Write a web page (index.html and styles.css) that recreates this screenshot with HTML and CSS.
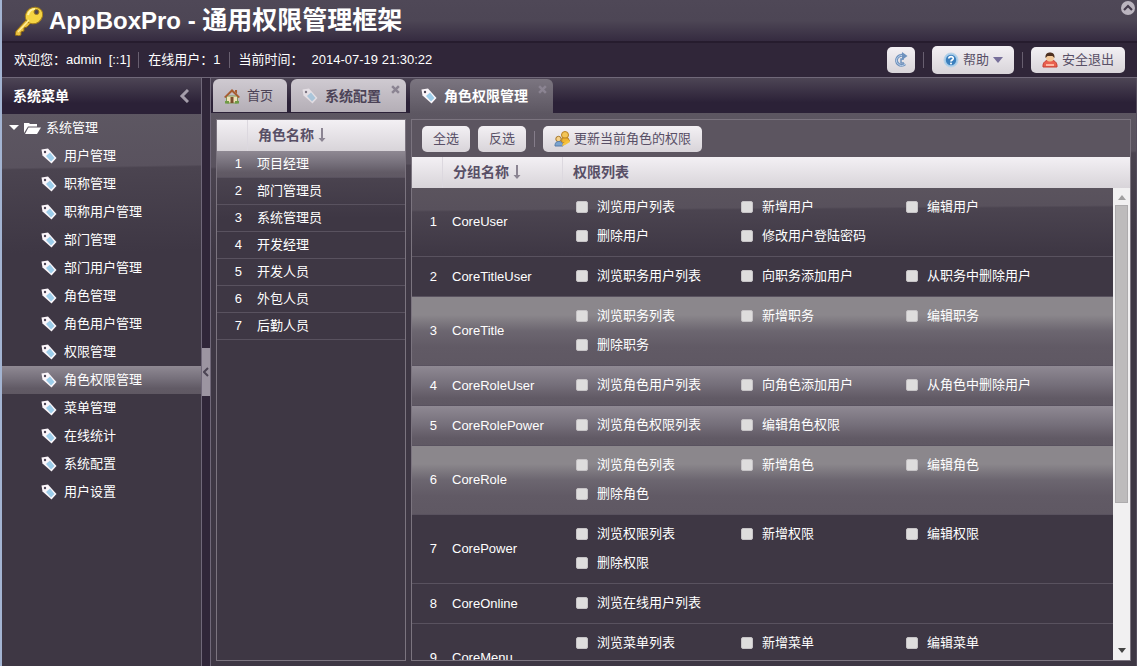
FILE: index.html
```html
<!DOCTYPE html>
<html lang="zh-CN">
<head>
<meta charset="utf-8">
<title>AppBoxPro - 通用权限管理框架</title>
<link rel="stylesheet" href="styles.css">
</head>
<body>
<svg class="defs" aria-hidden="true">
  <symbol id="tag" viewBox="0 0 16 16">
    <path d="M.5 1.500 7 .5l8.500 9.500-5 5.500L1.500 7.500Z" fill="#fbf6fa"/>
    <path d="m5 8 4-3.500 4.500 5.500-3.500 3.500Z" fill="#9ccdea"/>
    <circle cx="4" cy="4" r="1.200" fill="#4c4455"/>
  </symbol>
  <symbol id="arrow" viewBox="0 0 8 14"><path d="M3 0h2v10h2.500L4 14 .5 10H3Z" fill="#8b8492"/></symbol>
  <symbol id="cross" viewBox="0 0 8 8"><path d="m1 1 6 6M7 1 1 7" stroke="#8b8492" stroke-width="2.200"/></symbol>
</svg>
<div class="app">
  <header class="banner">
    <svg class="key" viewBox="0 0 28 30">
      <path d="M12 13 1 25l-1 4 4 1 2-1v-3l3-1v-3l3-1 4-4Z" fill="#e9c040" stroke="#8d6814" stroke-width="1"/>
      <ellipse cx="19" cy="9.500" rx="9" ry="8" fill="#f4d443" stroke="#a37e1c" transform="rotate(-35 19 9.500)"/>
      <path d="M13 9c1-4 4-6 7-6" stroke="#fff3a5" stroke-width="2" fill="none"/>
      <circle cx="21.500" cy="6" r="2.500" fill="#4b4453" stroke="#a37e1c"/>
      <path d="M3 26 14 14" stroke="#fff0a0" stroke-width="1.200"/>
    </svg>
    <h1>AppBoxPro - <span>通用权限管理框架</span></h1>
    <button class="fold" aria-label="折叠"><svg viewBox="0 0 14 14"><circle cx="7" cy="7" r="7" fill="#bbb5bf"/><path d="m3 9 4-4 4 4" fill="none" stroke="#443b4c" stroke-width="2.200"/></svg></button>
  </header>
  <div class="status">
    <span>欢迎您：admin&nbsp; [::1]</span><i class="sep"></i>
    <span>在线用户：1</span><i class="sep"></i>
    <span>当前时间：</span><span class="time">2014-07-19 21:30:22</span>
    <div class="actions">
      <button class="btn square" aria-label="刷新"><svg class="ico" viewBox="0 0 16 16"><path d="M12 12a5 5 0 1 1-1-8" fill="none" stroke="#6f91bd" stroke-width="3"/><path d="M12 12a5 5 0 1 1-1-8" fill="none" stroke="#b9d0ea" stroke-width="1"/><path d="m9 0 5.500 4L9 8Z" fill="#6f91bd"/><path d="M11 7H8v4h3" fill="none" stroke="#6f91bd" stroke-width="1.500"/></svg></button>
      <i class="sep"></i>
      <button class="btn tall"><svg class="ico" viewBox="0 0 16 16"><circle cx="8" cy="8" r="7" fill="#a5cbe9" stroke="#b9d3e8"/><circle cx="8" cy="8" r="5.200" fill="#3b7fbd"/><path d="M5.800 6.500C6 4 10.500 4 10.200 6.700 10 8 8 8 8 9.500" fill="none" stroke="#fff" stroke-width="1.700"/><circle cx="8" cy="11.500" r="1" fill="#fff"/></svg><span>帮助</span><svg class="caret" viewBox="0 0 10 6"><path d="M0 0h10L5 6Z" fill="#776f9a"/></svg></button>
      <i class="sep"></i>
      <button class="btn"><svg class="ico" viewBox="0 0 16 16"><path d="M1 15c-.5-5 3-7 7-7s7.500 2 7 7Z" fill="#e9604f" stroke="#c53c32"/><path d="M4 13h8" stroke="#ffb49f" stroke-width="2"/><circle cx="8" cy="5.500" r="4" fill="#f3c99b"/><path d="M3.500 6C3 1.500 6 .5 8 .5s5 1 4.500 5.500L10.500 4h-5Z" fill="#4d2f20"/></svg><span>安全退出</span></button>
    </div>
  </div>
  <div class="work">
    <aside class="side">
      <div class="side-head"><h2>系统菜单</h2><svg viewBox="0 0 10 14"><path d="M9 1 3 7l6 6" fill="none" stroke="#a49daa" stroke-width="3"/></svg></div>
      <nav class="tree glare">
        <div class="node root"><svg class="open" viewBox="0 0 10 6"><path d="M0 0h10L5 5Z" fill="#fff"/></svg><svg class="folder" viewBox="0 0 17 12"><path d="M0 11V1h5l1 1h7v2.500H4Z" fill="#fff"/><path d="M4.500 5.500H17L13 12H1Z" fill="#fff"/></svg><span>系统管理</span></div>
        <a class="node" href="#"><svg class="tag"><use href="#tag"/></svg>用户管理</a>
        <a class="node" href="#"><svg class="tag"><use href="#tag"/></svg>职称管理</a>
        <a class="node" href="#"><svg class="tag"><use href="#tag"/></svg>职称用户管理</a>
        <a class="node" href="#"><svg class="tag"><use href="#tag"/></svg>部门管理</a>
        <a class="node" href="#"><svg class="tag"><use href="#tag"/></svg>部门用户管理</a>
        <a class="node" href="#"><svg class="tag"><use href="#tag"/></svg>角色管理</a>
        <a class="node" href="#"><svg class="tag"><use href="#tag"/></svg>角色用户管理</a>
        <a class="node" href="#"><svg class="tag"><use href="#tag"/></svg>权限管理</a>
        <a class="node on" href="#"><svg class="tag"><use href="#tag"/></svg>角色权限管理</a>
        <a class="node" href="#"><svg class="tag"><use href="#tag"/></svg>菜单管理</a>
        <a class="node" href="#"><svg class="tag"><use href="#tag"/></svg>在线统计</a>
        <a class="node" href="#"><svg class="tag"><use href="#tag"/></svg>系统配置</a>
        <a class="node" href="#"><svg class="tag"><use href="#tag"/></svg>用户设置</a>
      </nav>
    </aside>
    <div class="split"><button aria-label="收起"><svg viewBox="0 0 6 10"><path d="M5 1 1 5l4 4" fill="none" stroke="#4b4453" stroke-width="2"/></svg></button></div>
    <main class="main">
      <div class="tabs">
        <button class="tab home"><svg class="ico" viewBox="0 0 16 16"><path d="M2.500 8h11v7h-11Z" fill="#efe0b8" stroke="#7d9a58"/><path d="M0 9 8 1l8 8-1.500 1L8 4 1.500 10Z" fill="#a65c31"/><path d="M11 2h2v4l-2-2Z" fill="#a65c31"/><path d="M6.500 9h3v6h-3Z" fill="#7c4d2d"/><path d="M1 13h4v2.500H1ZM11 13h4v2.500h-4Z" fill="#6f9b45"/></svg><span>首页</span></button>
        <button class="tab"><svg class="tag dim"><use href="#tag"/></svg><b>系统配置</b><svg class="close"><use href="#cross"/></svg></button>
        <button class="tab on"><svg class="tag"><use href="#tag"/></svg><b>角色权限管理</b><svg class="close"><use href="#cross"/></svg></button>
      </div>
      <div class="panes glare">
        <section class="pane roles">
          <table class="head"><colgroup><col class="n"><col></colgroup><thead><tr><th></th><th>角色名称<svg class="sort"><use href="#arrow"/></svg></th></tr></thead></table>
          <div class="scroll glare low">
            <table><colgroup><col class="n"><col></colgroup><tbody>
              <tr class="on"><td class="num">1</td><td>项目经理</td></tr>
              <tr><td class="num">2</td><td>部门管理员</td></tr>
              <tr><td class="num">3</td><td>系统管理员</td></tr>
              <tr><td class="num">4</td><td>开发经理</td></tr>
              <tr><td class="num">5</td><td>开发人员</td></tr>
              <tr><td class="num">6</td><td>外包人员</td></tr>
              <tr><td class="num">7</td><td>后勤人员</td></tr>
            </tbody></table>
          </div>
        </section>
        <section class="pane powers">
          <div class="tools"><button class="btn">全选</button><button class="btn">反选</button><i class="sep"></i><button class="btn"><svg class="ico" viewBox="0 0 16 16"><circle cx="11" cy="4" r="3.500" fill="#f3c556" stroke="#b98222"/><path d="M8 7h6l1.500 3-4 2-4-1Z" fill="#f0b52f" stroke="#b98222"/><circle cx="4.500" cy="8" r="2.700" fill="#f5d18b" stroke="#a5772b"/><path d="M1 15c0-4 2-4.500 4-4.500s4 1 4 4.500Z" fill="#7ba4cf" stroke="#587ba8"/><path d="m8 15 1-3 6-3 1 2-5 3Z" fill="#f5c23b"/></svg><span>更新当前角色的权限</span></button></div>
          <table class="head"><colgroup><col class="n"><col class="g"><col></colgroup><thead><tr><th></th><th>分组名称<svg class="sort"><use href="#arrow"/></svg></th><th>权限列表</th></tr></thead></table>
          <div class="list">
            <div class="scroll glare low">
              <table><colgroup><col class="n"><col class="g"><col></colgroup><tbody>
                <tr><td class="num">1</td><td>CoreUser</td><td><div class="checks"><label><input type="checkbox">浏览用户列表</label><label><input type="checkbox">新增用户</label><label><input type="checkbox">编辑用户</label><label><input type="checkbox">删除用户</label><label><input type="checkbox">修改用户登陆密码</label></div></td></tr>
                <tr class="plain"><td class="num">2</td><td>CoreTitleUser</td><td><div class="checks"><label><input type="checkbox">浏览职务用户列表</label><label><input type="checkbox">向职务添加用户</label><label><input type="checkbox">从职务中删除用户</label></div></td></tr>
                <tr class="on big"><td class="num">3</td><td>CoreTitle</td><td><div class="checks"><label><input type="checkbox">浏览职务列表</label><label><input type="checkbox">新增职务</label><label><input type="checkbox">编辑职务</label><label><input type="checkbox">删除职务</label></div></td></tr>
                <tr class="on"><td class="num">4</td><td>CoreRoleUser</td><td><div class="checks"><label><input type="checkbox">浏览角色用户列表</label><label><input type="checkbox">向角色添加用户</label><label><input type="checkbox">从角色中删除用户</label></div></td></tr>
                <tr class="on"><td class="num">5</td><td>CoreRolePower</td><td><div class="checks"><label><input type="checkbox">浏览角色权限列表</label><label><input type="checkbox">编辑角色权限</label></div></td></tr>
                <tr class="on big"><td class="num">6</td><td>CoreRole</td><td><div class="checks"><label><input type="checkbox">浏览角色列表</label><label><input type="checkbox">新增角色</label><label><input type="checkbox">编辑角色</label><label><input type="checkbox">删除角色</label></div></td></tr>
                <tr><td class="num">7</td><td>CorePower</td><td><div class="checks"><label><input type="checkbox">浏览权限列表</label><label><input type="checkbox">新增权限</label><label><input type="checkbox">编辑权限</label><label><input type="checkbox">删除权限</label></div></td></tr>
                <tr><td class="num">8</td><td>CoreOnline</td><td><div class="checks"><label><input type="checkbox">浏览在线用户列表</label></div></td></tr>
                <tr class="last"><td class="num">9</td><td>CoreMenu</td><td><div class="checks"><label><input type="checkbox">浏览菜单列表</label><label><input type="checkbox">新增菜单</label><label><input type="checkbox">编辑菜单</label></div></td></tr>
              </tbody></table>
            </div>
            <div class="bar"><svg viewBox="0 0 8 5"><path d="M0 5h8L4 0Z" fill="#a09fa0"/></svg><div class="track"><div class="thumb"></div></div><svg viewBox="0 0 8 5"><path d="M0 0h8L4 5Z" fill="#444"/></svg></div>
          </div>
        </section>
      </div>
    </main>
  </div>
</div>
</body>
</html>
```
FILE: styles.css
```css
* { box-sizing: border-box; }
body { margin: 0; background: #302639; color: #fff; font: 13px/20px "Liberation Sans", "Noto Sans CJK SC", sans-serif; }
button { font: inherit; border: 0; padding: 0; background: none; color: inherit; }
h1, h2 { margin: 0; }
svg { flex: none; display: block; }
.defs { position: absolute; width: 0; height: 0; }
.app { height: 100vh; display: flex; flex-direction: column; overflow: hidden; border-left: 2px solid #a3b4d2; }
.app, .work, .main, .panes, .pane, .scroll { min-height: 0; min-width: 0; }

.banner { flex: none; height: 43px; display: flex; align-items: center; gap: 6px; padding-left: 13px; background: linear-gradient(#4f4857, #4d4655 50%, #352b40); border-bottom: 2px solid #261c2e; }
.banner h1 { font-size: 24px; line-height: 32px; }
.banner h1 span { font-size: 25px; }
.key { width: 28px; height: 30px; }
.fold { margin-left: auto; align-self: flex-start; padding: 1px 2px 0 0; }
.fold svg { width: 14px; height: 14px; }

.status { flex: none; height: 34px; display: flex; align-items: center; padding: 0 12px; }
.time { margin-left: 8px; }
.sep { width: 1px; height: 16px; background: #685f70; margin: 0 8px; }
.status > .sep { margin-right: 9px; }
.actions { margin-left: auto; display: flex; align-items: center; }
.btn { height: 26px; display: flex; align-items: center; gap: 4px; padding: 0 11px; border-radius: 5px; background: linear-gradient(#f3f0f4, #d8d4d9); color: #584f66; }
.btn.tall { height: 28px; }
.btn.square { padding: 0 6px; }
.ico { width: 16px; height: 16px; }
.caret { width: 10px; height: 6px; }

.work { flex: 1; display: flex; border-top: 1px solid #706879; }
.side { width: 200px; flex: none; display: flex; flex-direction: column; border-right: 1px solid #706879; }
.side-head { height: 36px; flex: none; display: flex; align-items: center; justify-content: space-between; padding: 0 12px 0 11px; background: linear-gradient(#4d4555, #2b2137 70%); }
.side-head h2 { font-size: 14px; line-height: 20px; }
.side-head svg { width: 10px; height: 14px; }
.glare { background: linear-gradient(179deg, #5d5762, #59525e 54px, #4b4450 56px, #3e3744 140px); }
.glare.low { background: linear-gradient(179.6deg, #5b545e, #58515c 22px, #4b4450 24px, #3e3744 68px); }
.tree { flex: 1; }
.node { height: 28px; display: flex; align-items: center; gap: 7px; padding-left: 39px; color: inherit; text-decoration: none; }
.node.root { padding-left: 7px; gap: 5px; }
.node.on, tr.on { background: linear-gradient(#8f8993, #76707b 45%, #615a65 80%, #5f5863); }
.open { width: 10px; height: 6px; }
.folder { width: 17px; height: 12px; }
.tag { width: 16px; height: 16px; }
.dim { opacity: .6; }
.split { width: 8px; flex: none; display: flex; align-items: center; }
.split button { width: 8px; height: 48px; background: #9c95a1; display: flex; align-items: center; justify-content: center; }
.split svg { width: 6px; height: 10px; }

.main { flex: 1; display: flex; flex-direction: column; border-left: 1px solid #706879; border-right: 1px solid #554d5d; }
.tabs { height: 35px; flex: none; display: flex; align-items: flex-start; gap: 4px; padding: 1px 2px 0; background: linear-gradient(#4d4555, #2b2137 70%); }
.tab { position: relative; height: 33px; display: flex; align-items: center; gap: 7px; padding: 0 25px 0 11px; border-radius: 6px 6px 0 0; background: linear-gradient(#cfcad1, #b4aeb6); color: #4c4357; }
.tab.home { padding-right: 14px; }
.tab b { font-size: 14px; }
.tab.on { height: 34px; background: linear-gradient(#7b7580, #5d5762); color: #fff; }
.close { position: absolute; top: 6px; right: 6px; width: 9px; height: 9px; }
.panes { flex: 1; display: flex; gap: 5px; padding: 6px 5px 5px; }
.pane { display: flex; flex-direction: column; border: 1px solid #7b747f; }
.roles { width: 190px; flex: none; }
.powers { flex: 1; }
.tools { height: 37px; flex: none; display: flex; align-items: center; padding: 0 10px; background: #5c5560; }
.tools .btn + .btn { margin-left: 8px; }
.tools .sep { background: #857d8a; }
table { width: 100%; table-layout: fixed; border-collapse: separate; border-spacing: 0; }
col.n { width: 30px; }
col.g { width: 120px; }
.head { flex: none; background: linear-gradient(#f3f0f4, #d8d4d9); color: #584f66; }
th { height: 31px; padding: 0 0 2px 10px; text-align: left; font-size: 14px; }
th + th { border-left: 1px solid #dcd8df; }
.sort { display: inline-block; width: 8px; height: 14px; margin-left: 4px; vertical-align: -2px; }
td { height: 27px; padding: 0 0 0 10px; border-bottom: 1px solid #59525f; }
td.num { text-align: right; padding: 0 5px 0 0; }
.scroll { flex: 1; overflow: hidden; }
.plain { background: #3e3744; }
.list { flex: 1; min-height: 0; display: flex; }
tr.big { background: linear-gradient(#8b878c 18px, #6c6670 34px, #615a65 50px, #5f5863); }
.last td { height: 69px; }
.last td:last-child { vertical-align: top; }
.checks { display: grid; grid-template-columns: repeat(auto-fill, 165px); grid-auto-rows: 29px; padding: 4px 0 6px 4px; }
.checks label { display: flex; align-items: center; gap: 9px; white-space: nowrap; }
input { appearance: none; width: 12px; height: 12px; margin: 0; border: 1px solid #c6c3c6; border-radius: 2px; background: #dedddd; }
.bar { width: 17px; flex: none; display: flex; flex-direction: column; align-items: center; justify-content: space-between; padding: 7px 2px; background: #f1f0f1; }
.bar svg { width: 8px; height: 5px; }
.track { flex: 1; align-self: stretch; padding: 5px 0; }
.thumb { height: 68%; background: #bdbbbc; border: 1px solid #adabad; }
```
